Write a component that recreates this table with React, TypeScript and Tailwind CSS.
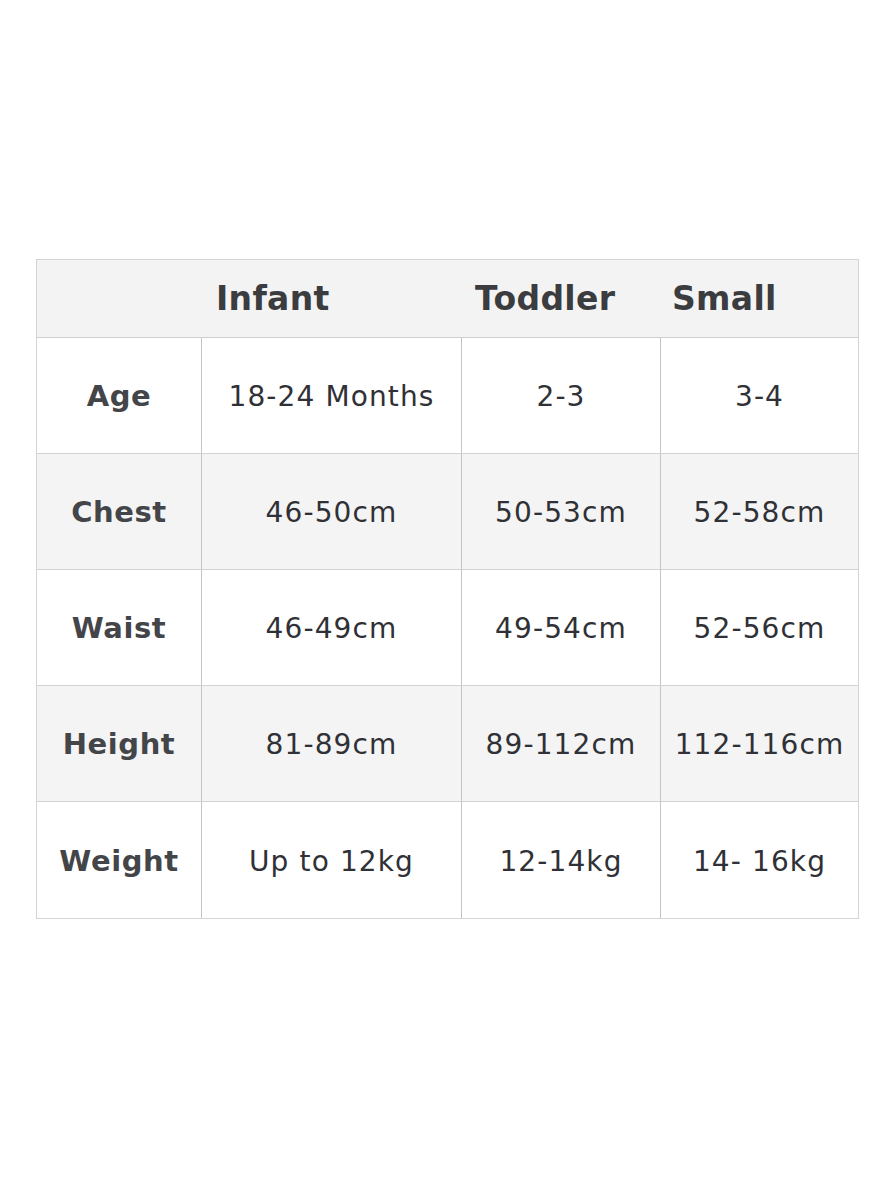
import React from "react";

const rows = [
  { label: "Age", vals: ["18-24 Months", "2-3", "3-4"], gray: false },
  { label: "Chest", vals: ["46-50cm", "50-53cm", "52-58cm"], gray: true },
  { label: "Waist", vals: ["46-49cm", "49-54cm", "52-56cm"], gray: false },
  { label: "Height", vals: ["81-89cm", "89-112cm", "112-116cm"], gray: true },
  { label: "Weight", vals: ["Up to 12kg", "12-14kg", "14- 16kg"], gray: false },
];

export default function App() {
  return (
    <div
      className="w-[889px] h-[1200px] bg-white pt-[259px] pl-[36px]"
      style={{ fontFamily: '"DejaVu Sans", "Liberation Sans", sans-serif' }}
    >
      <div className="w-[823px] border border-[#d4d4d4]">
        <div className="grid grid-cols-[179px_259px_197px_1fr] h-[78px] items-center bg-[#f3f3f3] border-b border-[#cfcfcf] text-[33px] font-bold text-[#3a3c40] tracking-[0.01em]">
          <div />
          <div>Infant</div>
          <div>Toddler</div>
          <div>Small</div>
        </div>
        {rows.map((r, i) => (
          <div
            key={r.label}
            className={`grid grid-cols-[165px_260px_199px_1fr] h-[116px] ${
              r.gray ? "bg-[#f4f4f4]" : "bg-white"
            } ${i < rows.length - 1 ? "border-b border-[#d2d2d2]" : ""}`}
          >
            <div className="flex items-center justify-center pt-[3px] border-r border-[#c4c4c4] text-[29px] font-bold text-[#434549] tracking-[0.02em]">
              {r.label}
            </div>
            {r.vals.map((v, j) => (
              <div
                key={j}
                className={`flex items-center justify-center pt-[3px] text-[28px] text-[#2f3136] tracking-[0.04em] whitespace-nowrap ${
                  j < 2 ? "border-r border-[#c4c4c4]" : ""
                }`}
              >
                {v}
              </div>
            ))}
          </div>
        ))}
      </div>
    </div>
  );
}
